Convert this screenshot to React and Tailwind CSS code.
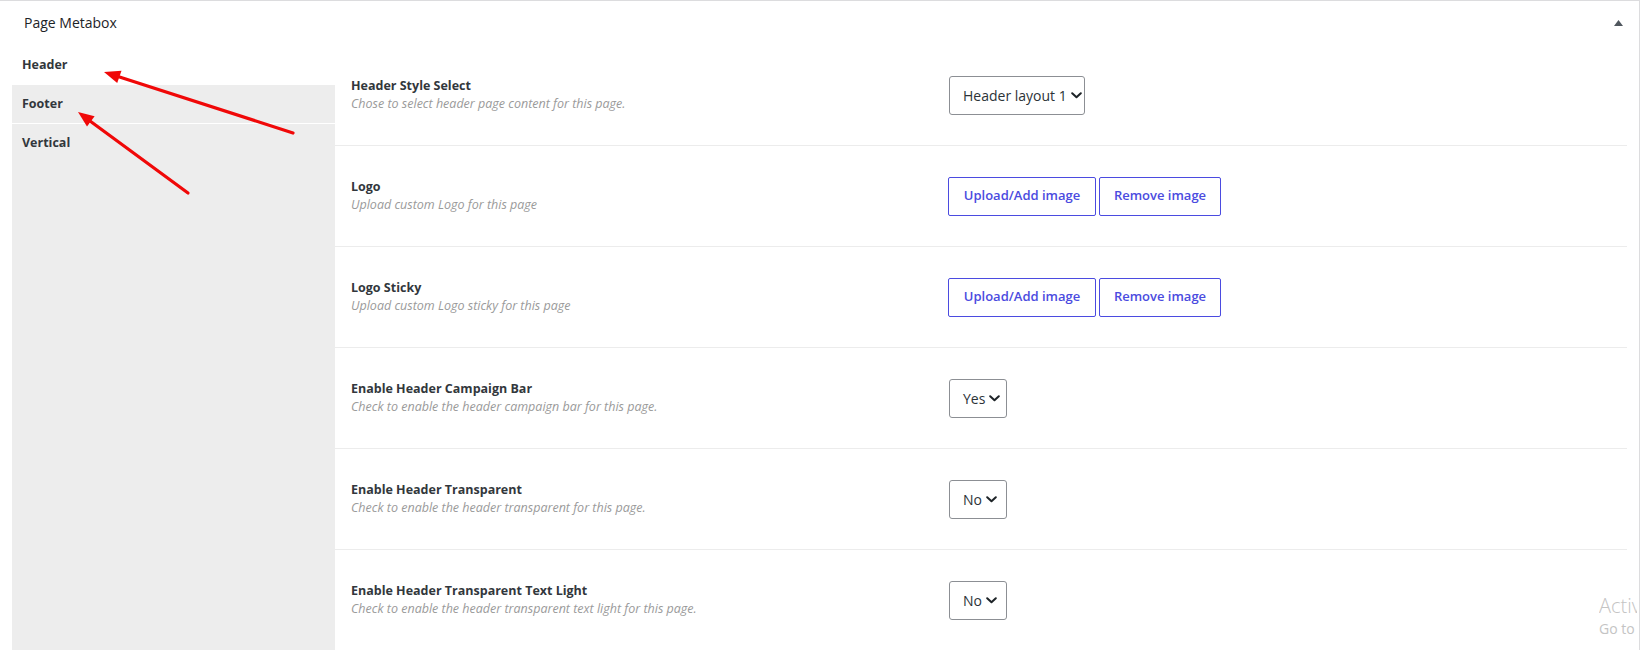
import React from "react";

const rows = [
  { label: "Header Style Select", desc: "Chose to select header page content for this page.", type: "select", value: "Header layout 1", w: "w-[136px]" },
  { label: "Logo", desc: "Upload custom Logo for this page", type: "buttons" },
  { label: "Logo Sticky", desc: "Upload custom Logo sticky for this page", type: "buttons" },
  { label: "Enable Header Campaign Bar", desc: "Check to enable the header campaign bar for this page.", type: "select", value: "Yes", w: "w-[58px]" },
  { label: "Enable Header Transparent", desc: "Check to enable the header transparent for this page.", type: "select", value: "No", w: "w-[58px]" },
  { label: "Enable Header Transparent Text Light", desc: "Check to enable the header transparent text light for this page.", type: "select", value: "No", w: "w-[58px]" },
];

function Chevron() {
  return (
    <svg width="11" height="7" viewBox="0 0 11 7" className="ml-[4px] shrink-0">
      <path d="M1.2 1.2 L5.5 5.3 L9.8 1.2" fill="none" stroke="#1d2327" strokeWidth="2" strokeLinecap="round" strokeLinejoin="round" />
    </svg>
  );
}

function Select({ value, w }) {
  return (
    <div className={`${w} h-[39px] border border-[#8c8f94] rounded-[3px] flex items-center pl-[13px] text-[14px] text-[#2c3338] bg-white`}>
      <span>{value}</span>
      <Chevron />
    </div>
  );
}

function Btn({ children, w }) {
  return (
    <div className={`${w} h-[39px] border border-[#4b4be0] rounded-[2px] flex items-center justify-center text-[13px] font-semibold text-[#4b4be0]`}>
      {children}
    </div>
  );
}

export default function App() {
  return (
    <div className="relative w-[1641px] h-[650px] overflow-hidden bg-white" style={{ fontFamily: '"Open Sans", "Noto Sans", sans-serif' }}>
      <div className="h-[650px] w-[1640px] border-t border-r border-[#dcdcde] flex flex-col">
        <div className="h-[44px] shrink-0 flex items-center justify-between pl-[24px] pr-[16px]">
          <span className="text-[14px] text-[#1d2327] -mt-[1px]">Page Metabox</span>
          <svg width="9" height="6" viewBox="0 0 9 6" className="-mt-[1px]"><path d="M4.5 0 L9 6 L0 6 Z" fill="#50575e" /></svg>
        </div>
        <div className="flex flex-1 px-[12px]">
          <div className="w-[323px] shrink-0 bg-[#ededed] flex flex-col">
            <div className="h-[40px] bg-white flex items-center pl-[10px] text-[12.5px] font-bold text-[#32373c]">Header</div>
            <div className="h-[39px] border-b border-white flex items-center pl-[10px] text-[12.5px] font-bold text-[#32373c]">Footer</div>
            <div className="h-[39px] flex items-center pl-[10px] text-[12.5px] font-bold text-[#32373c]">Vertical</div>
          </div>
          <div className="flex-1 flex flex-col">
            {rows.map((r, i) => (
              <div key={i} className="h-[101px] shrink-0 border-b border-[#ececec] flex items-center">
                <div className="w-[614px] shrink-0 pl-[16px] flex flex-col">
                  <span className="text-[12.5px] leading-[18px] font-bold text-[#32373c]">{r.label}</span>
                  <span className="text-[12.5px] leading-[18px] italic text-[#9a9a9a]">{r.desc}</span>
                </div>
                {r.type === "select" ? (
                  <Select value={r.value} w={r.w} />
                ) : (
                  <div className="flex gap-[3px] -ml-[1px]">
                    <Btn w="w-[148px]">Upload/Add image</Btn>
                    <Btn w="w-[122px]">Remove image</Btn>
                  </div>
                )}
              </div>
            ))}
          </div>
        </div>
      </div>

      <div className="absolute left-[1599px] top-[593px] w-[38px] overflow-hidden pointer-events-none">
        <div className="whitespace-nowrap text-[20px] leading-[26px] font-light text-[#c4c4c4]">Activate Windows</div>
        <div className="whitespace-nowrap text-[14px] leading-[20px] text-[#c4c4c4]">Go to Settings to activate Windows.</div>
      </div>

      <svg className="absolute left-0 top-0 pointer-events-none" width="400" height="220" viewBox="0 0 400 220">
        <line x1="293" y1="133" x2="118" y2="76.5" stroke="#f00808" strokeWidth="3.2" strokeLinecap="round" />
        <path d="M104 72 L121.5 70.8 L117.2 83 Z" fill="#f00808" />
        <line x1="188" y1="193" x2="90" y2="121" stroke="#f00808" strokeWidth="3.2" strokeLinecap="round" />
        <path d="M78 112 L94.6 116.3 L87 126.6 Z" fill="#f00808" />
      </svg>
    </div>
  );
}
